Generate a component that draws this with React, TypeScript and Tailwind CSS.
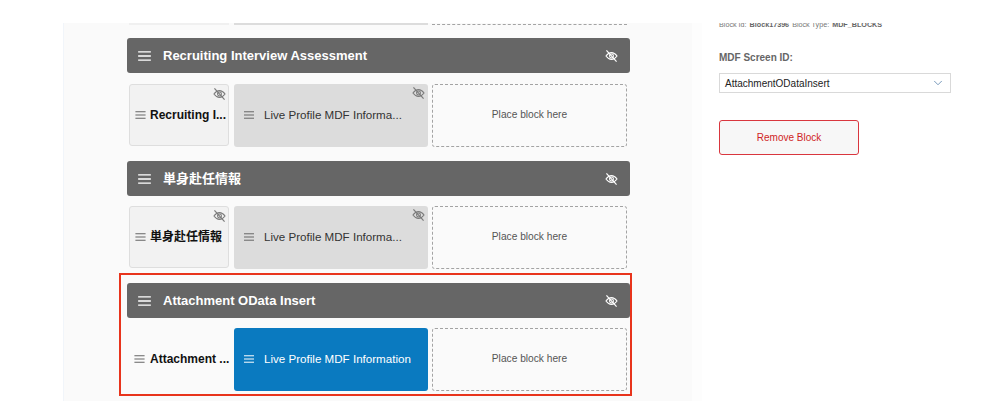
import { ChevronDown } from 'lucide-react';

function MenuIcon({ className }: { className: string }) {
  return (
    <svg viewBox="0 0 14 11" className={className} fill="none" stroke="currentColor" strokeWidth="1.4">
      <path d="M0 1h14M0 5.5h14M0 10h14" />
    </svg>
  );
}

function HideIcon({ className }: { className: string }) {
  return (
    <svg viewBox="0 0 14 13" className={className} fill="none" stroke="currentColor" strokeWidth="1.2">
      <path d="M1 6.500C3 3.800 5 2.800 7 2.800s4 1 6 3.700c-2 2.700-4 3.700-6 3.700S3 9.200 1 6.500Z" />
      <circle cx="7" cy="6.500" r="2.100" />
      <path d="M1.500 .5l11 12" strokeWidth="1.300" />
    </svg>
  );
}

function SectionHeader({ title }: { title: string }) {
  return (
    <div className="h-[35px] w-[503px] rounded-[3px] bg-[#666666] flex items-center pl-[11px] pr-[12px] text-white">
      <MenuIcon className="w-[13px] h-[10px] shrink-0" />
      <span className="ml-[12px] text-[13px] font-bold flex-1 truncate">{title}</span>
      <HideIcon className="w-[13px] h-[12px] shrink-0" />
    </div>
  );
}

function BlockRow({ label, selected, first }: { label: string; selected?: boolean; first?: boolean }) {
  return (
    <div className={`${first ? 'mt-[11px]' : 'mt-[10px]'} ml-[2px] flex h-[63px]`}>
      <div className={`relative w-[100px] h-[62px] rounded-[3px] flex items-center pl-[5px] pb-[1px] ${selected ? '' : 'bg-[#f2f2f2] border border-[#dedede]'}`}>
        {!selected && <HideIcon className="absolute right-[2px] top-[3px] w-[13px] h-[12px] text-[#7a7a7a]" />}
        <MenuIcon className="w-[11px] h-[8px] shrink-0 text-[#666666]" />
        <span className={`${selected ? 'ml-[5px]' : 'ml-[4px]'} text-[12px] font-bold text-[#111111] whitespace-nowrap`}>{label}</span>
      </div>
      <div className={`relative ml-[5px] w-[194px] h-[63px] rounded-[3px] flex items-center pl-[10px] pb-[2px] ${selected ? 'bg-[#0a7ac0] text-white' : 'bg-[#dcdcdc] text-[#333333]'}`}>
        {!selected && <HideIcon className="absolute right-[3px] top-[3px] w-[13px] h-[12px] text-[#7a7a7a]" />}
        <MenuIcon className={`w-[10px] h-[8px] shrink-0 ${selected ? 'text-white' : 'text-[#666666]'}`} />
        <span className="ml-[10px] text-[11.600px] whitespace-nowrap">
          {selected ? 'Live Profile MDF Information' : 'Live Profile MDF Informa...'}
        </span>
      </div>
      <div className="ml-[4px] w-[195px] h-[63px] rounded-[3px] border border-dashed border-[#a3a3a3] flex items-center justify-center pb-[2px] text-[10.200px] text-[#555555]">
        Place block here
      </div>
    </div>
  );
}

function Section({ title, label, selected, first }: { title: string; label: string; selected?: boolean; first?: boolean }) {
  const box = selected
    ? 'h-[123px] border-2 border-[#e8341c] pl-[6px] pt-[8px]'
    : first
      ? 'h-[123px] pl-[8px] pt-[10px]'
      : 'h-[122px] pl-[8px] pt-[10px]';
  return (
    <div className={`w-[513px] ml-[55px] ${box}`}>
      <SectionHeader title={title} />
      <BlockRow label={label} selected={selected} first={first} />
    </div>
  );
}

export default function App() {
  return (
    <div className="h-[404px] w-[991px] overflow-hidden bg-white flex pt-[23px] font-['Liberation_Sans','Noto_Sans_CJK_JP',sans-serif]">
      <div className="ml-[63px] w-[629px] h-[378px] bg-[#fafafa] border-l border-[#f1f5fa] shrink-0">
        <div className="flex h-[2px] ml-[65px]">
          <div className="w-[100px] bg-[#f0f0f0]" />
          <div className="ml-[5px] w-[194px] bg-[#dcdcdc]" />
          <div className="ml-[4px] w-[195px] border-b border-dashed border-[#a3a3a3]" />
        </div>
        <div className="h-[3px]" />
        <Section title="Recruiting Interview Assessment" label="Recruiting I..." first />
        <Section title="単身赴任情報" label="単身赴任情報" />
        <Section title="Attachment OData Insert" label="Attachment ..." selected />
      </div>
      <div className="w-[10px] h-[378px] bg-[#fdfdfd] shrink-0" />
      <div className="pl-[17px] flex-1 overflow-hidden">
        <div className="-mt-[2px] h-[7px] text-[7.200px] leading-[7px] text-[#777777] whitespace-nowrap">
          Block Id: <b className="ml-[1px] text-[#666666]">Block17396</b> <span className="ml-[1px]">Block Type:</span> <b className="ml-[1px] text-[#666666]">MDF_BLOCKS</b>
        </div>
        <div className="mt-[23px] text-[10px] font-bold text-[#666666] leading-[14px]">MDF Screen ID:</div>
        <div className="mt-[8px] w-[232px] h-[20px] bg-white border border-[#d9d9d9] flex items-center pl-[5px] pr-[5px] text-[10px] text-[#222222]">
          <span className="flex-1">AttachmentODataInsert</span>
          <ChevronDown className="w-[14px] h-[14px] text-[#4f7ba6]" strokeWidth={1.3} />
        </div>
        <button className="mt-[27px] w-[140px] h-[35px] rounded-[3px] bg-[#f7f7f7] border border-[#d9363e] text-[10px] text-[#d01f26] flex items-center justify-center">
          Remove Block
        </button>
      </div>
    </div>
  );
}
